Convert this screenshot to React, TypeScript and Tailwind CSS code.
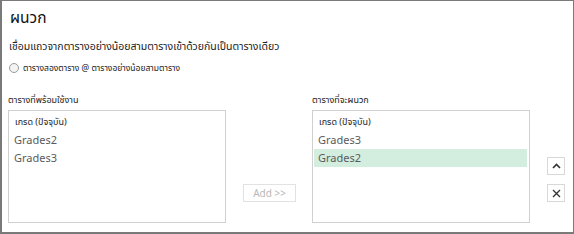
import React from "react"

const font = { fontFamily: '"Noto Sans", "Noto Sans Thai", "DejaVu Sans", sans-serif' }

const available = ["Grades2", "Grades3"]
const toAppend = ["Grades3", "Grades2"]

function ListBox({ items, selected }: { items: string[]; selected?: string }) {
  return (
    <div className="h-[113px] w-[218px] border border-[#d0d0d0] bg-white pt-[2px] pl-px pr-[2px]">
      <div className="flex h-[18px] items-center pl-[5px] text-[9px] text-[#222]">เกรด (ปัจจุบัน)</div>
      {items.map((it) => (
        <div
          key={it}
          className={
            it === selected
              ? "flex h-[18px] items-center bg-[#d3eedf] pl-[4px] text-[11px] text-[#5a5a5a]"
              : "flex h-[18px] items-center pl-[4px] text-[11px] text-[#5a5a5a]"
          }
        >
          {it}
        </div>
      ))}
    </div>
  )
}

export default function App() {
  return (
    <div
      style={font}
      className="flex h-[234px] w-[574px] flex-col border-t border-r border-b-2 border-l-2 border-[#7a7a7a] bg-white pl-[6px]"
    >
      {/* Header */}
      <div className="mt-[4px] pl-[2px] text-[15.5px] leading-6 text-[#111]">ผนวก</div>
      <div className="mt-[9px] pl-[1px] text-[10.5px] leading-4 text-[#222]">
        เชื่อมแถวจากตารางอย่างน้อยสามตารางเข้าด้วยกันเป็นตารางเดียว
      </div>
      <div className="mt-[6px] flex items-center gap-[4px] text-[8.5px] leading-4 text-[#222]">
        <span className="ml-[1px] inline-block h-[10px] w-[10px] rounded-full border border-[#9a9a9a] bg-[#f4f4f4]" />
        <span>ตารางสองตาราง @ ตารางอย่างน้อยสามตาราง</span>
      </div>

      {/* Lists */}
      <div className="mt-[18px] flex">
        <div className="flex flex-col">
          <div className="mb-[4px] h-[12px] text-[9px] leading-3 text-[#222]">ตารางที่พร้อมใช้งาน</div>
          <ListBox items={available} />
        </div>
        <div className="ml-[17px] flex items-end pb-[21px]">
          <button className="h-[18px] w-[53px] border border-[#e2e2e2] bg-white text-[10px] text-[#b8b8b8]">
            Add &gt;&gt;
          </button>
        </div>
        <div className="ml-[16px] flex flex-col">
          <div className="mb-[4px] h-[12px] text-[9px] leading-3 text-[#222]">ตารางที่จะผนวก</div>
          <ListBox items={toAppend} selected="Grades2" />
        </div>
        <div className="ml-[17px] flex flex-col justify-end gap-[9px] pb-[21px]">
          <button className="flex h-[18px] w-[18px] items-center justify-center border border-[#d8d8d8] bg-white">
            <svg width="9" height="6" viewBox="0 0 9 6">
              <path d="M1 5 L4.5 1.5 L8 5" fill="none" stroke="#333" strokeWidth="1.6" />
            </svg>
          </button>
          <button className="flex h-[18px] w-[18px] items-center justify-center border border-[#d8d8d8] bg-white">
            <svg width="9" height="9" viewBox="0 0 9 9">
              <path d="M1 1 L8 8 M8 1 L1 8" fill="none" stroke="#333" strokeWidth="1.3" />
            </svg>
          </button>
        </div>
      </div>
    </div>
  )
}
